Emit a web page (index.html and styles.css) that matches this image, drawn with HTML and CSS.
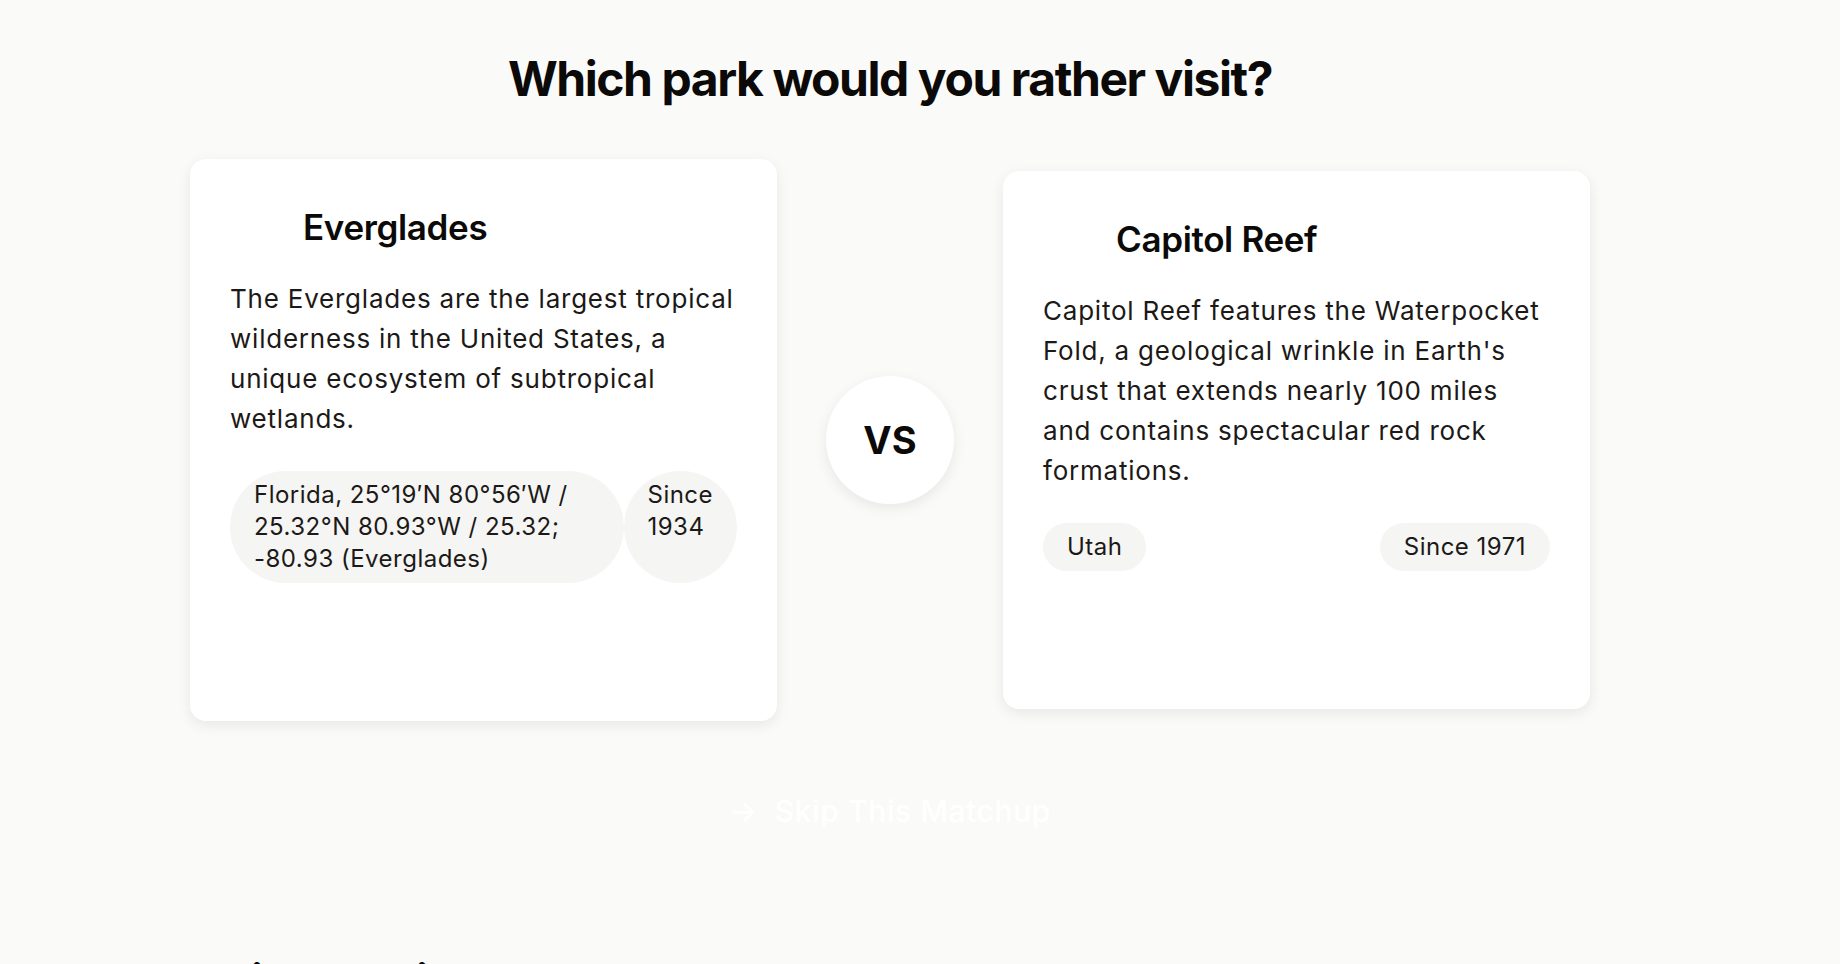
FILE: index.html
```html
<!DOCTYPE html>
<html lang="en">
<head>
<meta charset="utf-8">
<title>Which park would you rather visit?</title>
<link rel="stylesheet" href="styles.css">
</head>
<body>
<main class="page">
  <h1 class="question">Which park would you rather visit?</h1>
  <section class="matchup">
    <article class="card">
      <div class="card-head">
        <span class="card-icon"></span>
        <h2 class="card-title">Everglades</h2>
      </div>
      <p class="card-desc">The Everglades are the largest tropical wilderness in the United States, a unique ecosystem of subtropical wetlands.</p>
      <div class="tags">
        <span class="tag">Florida, 25°19′N 80°56′W / 25.32°N 80.93°W / 25.32; -80.93 (Everglades)</span>
        <span class="tag">Since 1934</span>
      </div>
      <div class="card-foot"></div>
    </article>
    <div class="vs">VS</div>
    <article class="card">
      <div class="card-head">
        <span class="card-icon"></span>
        <h2 class="card-title">Capitol Reef</h2>
      </div>
      <p class="card-desc">Capitol Reef features the Waterpocket Fold, a geological wrinkle in Earth's crust that extends nearly 100 miles and contains spectacular red rock formations.</p>
      <div class="tags">
        <span class="tag">Utah</span>
        <span class="tag">Since 1971</span>
      </div>
      <div class="card-foot"></div>
    </article>
  </section>
  <div class="skip-row">
    <button class="skip"><span class="skip-arrow">→</span> Skip This Matchup</button>
  </div>
  <section class="rankings">
    <h2 class="rankings-title">Live Rankings</h2>
  </section>
</main>
</body>
</html>
```
FILE: styles.css
```css
* { box-sizing: border-box; }
html, body { margin: 0; padding: 0; }
body {
  background: #fafaf9;
  color: #0c0a09;
  font-family: Inter, "Noto Sans", "Liberation Sans", sans-serif;
}
.page {
  width: 1400px;
  margin-left: 190px;
  padding-top: 50px;
}
.question {
  margin: 0 0 51px;
  text-align: center;
  font-size: 48px;
  line-height: 58px;
  font-weight: 700;
  letter-spacing: -0.03em;
}
.matchup {
  display: grid;
  grid-template-columns: 1fr 128px 1fr;
  column-gap: 49px;
  align-items: center;
}
.card {
  background: #fff;
  border-radius: 16px;
  padding: 40px;
  box-shadow: 0 4px 14px rgba(0, 0, 0, 0.08);
}
.card-head {
  display: flex;
  align-items: center;
  gap: 16px;
  height: 56px;
  margin-bottom: 24px;
}
.card-icon {
  width: 57px;
  height: 56px;
  flex: none;
}
.card-title {
  margin: 0;
  font-size: 35px;
  font-weight: 600;
  letter-spacing: -0.01em;
}
.card-desc {
  margin: 0 0 32px;
  font-size: 26px;
  line-height: 40px;
  letter-spacing: 0.03em;
  color: #1c1917;
}
.tags {
  display: flex;
  justify-content: space-between;
}
.tag {
  background: #f5f5f4;
  border-radius: 999px;
  padding: 8px 24px;
  font-size: 24px;
  line-height: 32px;
  letter-spacing: 0.02em;
  color: #1c1917;
}
.card-foot {
  height: 98px;
}
.vs {
  width: 128px;
  height: 128px;
  border-radius: 50%;
  background: #fff;
  box-shadow: 0 4px 14px rgba(0, 0, 0, 0.08);
  display: flex;
  align-items: center;
  justify-content: center;
  font-size: 38px;
  font-weight: 700;
}
.skip-row {
  display: flex;
  justify-content: center;
  margin-top: 62px;
}
.skip {
  background: none;
  border: none;
  color: #fff;
  font-family: inherit;
  font-size: 30px;
  line-height: 32px;
  letter-spacing: 0.02em;
  padding: 12px 24px;
  font-weight: 500;
}
.skip-arrow { margin-right: 8px; }
.rankings {
  margin-top: 116px;
  padding: 0 39px;
}
.rankings-title {
  margin: 0;
  font-size: 40px;
  line-height: 48px;
  font-weight: 700;
}
```
